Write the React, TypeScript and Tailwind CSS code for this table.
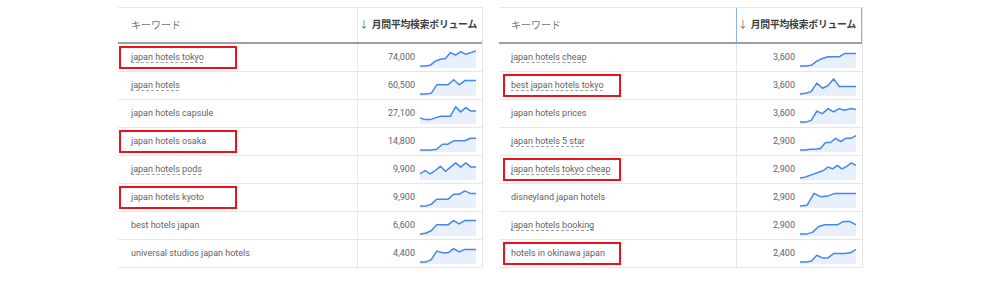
import React from "react";

type Row = { kw: string; vol: string; data: number[]; dotted?: boolean; marked?: boolean };

const leftRows: Row[] = [
  { kw: "japan hotels tokyo", vol: "74,000", dotted: true, marked: true, data: [0.05, 0.05, 0.1, 0.35, 0.45, 0.5, 0.85, 0.7, 0.9, 0.75, 0.85, 0.95] },
  { kw: "japan hotels", vol: "60,500", dotted: true, data: [0.05, 0.05, 0.1, 0.6, 0.6, 0.6, 0.9, 0.6, 0.85, 0.85, 0.85] },
  { kw: "japan hotels capsule", vol: "27,100", data: [0.3, 0.2, 0.2, 0.3, 0.4, 0.4, 0.4, 0.95, 0.65, 0.9, 0.7, 0.7] },
  { kw: "japan hotels osaka", vol: "14,800", marked: true, data: [0.05, 0.05, 0.05, 0.1, 0.4, 0.4, 0.6, 0.6, 0.6, 0.75, 0.75] },
  { kw: "japan hotels pods", vol: "9,900", dotted: true, data: [0.3, 0.5, 0.3, 0.5, 0.75, 0.45, 0.7, 0.95, 0.7, 0.95, 0.7, 0.7] },
  { kw: "japan hotels kyoto", vol: "9,900", marked: true, data: [0.05, 0.05, 0.15, 0.45, 0.45, 0.45, 0.75, 0.75, 0.95, 0.8, 0.8] },
  { kw: "best hotels japan", vol: "6,600", data: [0.05, 0.1, 0.25, 0.6, 0.6, 0.6, 0.85, 0.65, 0.85, 0.85, 0.85] },
  { kw: "universal studios japan hotels", vol: "4,400", data: [0.05, 0.05, 0.2, 0.7, 0.6, 0.6, 0.85, 0.65, 0.8, 0.8, 0.8] },
];

const rightRows: Row[] = [
  { kw: "japan hotels cheap", vol: "3,600", dotted: true, data: [0.05, 0.05, 0.1, 0.35, 0.5, 0.6, 0.6, 0.6, 0.8, 0.8, 0.8] },
  { kw: "best japan hotels tokyo", vol: "3,600", dotted: true, marked: true, data: [0.05, 0.1, 0.2, 0.7, 0.4, 0.55, 0.95, 0.5, 0.5, 0.5, 0.5] },
  { kw: "japan hotels prices", vol: "3,600", data: [0.05, 0.05, 0.15, 0.7, 0.55, 0.85, 0.65, 0.85, 0.75, 0.85, 0.8] },
  { kw: "japan hotels 5 star", vol: "2,900", dotted: true, data: [0.05, 0.05, 0.1, 0.1, 0.15, 0.5, 0.5, 0.75, 0.55, 0.75, 0.75, 0.9] },
  { kw: "japan hotels tokyo cheap", vol: "2,900", dotted: true, marked: true, data: [0.05, 0.1, 0.2, 0.3, 0.4, 0.5, 0.7, 0.6, 0.8, 0.6, 0.75, 0.95, 0.8] },
  { kw: "disneyland japan hotels", vol: "2,900", data: [0.05, 0.1, 0.8, 0.6, 0.65, 0.8, 0.8, 0.8, 0.8] },
  { kw: "japan hotels booking", vol: "2,900", dotted: true, data: [0.05, 0.05, 0.15, 0.5, 0.6, 0.6, 0.6, 0.8, 0.8, 0.6] },
  { kw: "hotels in okinawa japan", vol: "2,400", marked: true, data: [0.05, 0.05, 0.1, 0.45, 0.3, 0.3, 0.55, 0.55, 0.55, 0.6, 0.8] },
];

function Spark({ data }: { data: number[] }) {
  const w = 56;
  const h = 20;
  const pts = data.map((v, i) => [(i / (data.length - 1)) * w, h - 1 - v * (h - 3)]);
  const line = pts.map((p, i) => `${i ? "L" : "M"}${p[0].toFixed(1)} ${p[1].toFixed(1)}`).join(" ");
  const area = `${line} L${w} ${h} L0 ${h} Z`;
  return (
    <svg width={w} height={h} viewBox={`0 0 ${w} ${h}`} className="shrink-0">
      <path d={area} fill="#e8f0fe" />
      <path d={line} fill="none" stroke="#4285f4" strokeWidth="1.5" strokeLinejoin="round" />
    </svg>
  );
}

function Table({ rows, kwW, volW, boxLeft, textPl, active }: { rows: Row[]; kwW: string; volW: string; boxLeft: string; textPl: string; active?: boolean }) {
  return (
    <div className="border-t border-r border-[#e6e6e6] bg-white">
      {/* header */}
      <div className="flex h-[36px] border-b-2 border-[#9aa0a6]">
        <div className={`${kwW} ${textPl} flex items-center text-[10px] text-[#70757a]`}>キーワード</div>
        <div
          className={`${volW} flex items-center justify-end whitespace-nowrap pr-[5px] text-[9.8px] font-bold tracking-[-0.2px] text-[#3c4043] border-l ${
            active ? "border-[#8ab4f8] border-r" : "border-[#e6e6e6]"
          }`}
        >
          <span className="mr-[3px] font-normal text-[#5f6368]">↓</span>月間平均検索ボリューム
        </div>
      </div>
      {rows.map((r, i) => (
        <div key={i} className="flex h-[28px] border-b border-[#e6e6e6]">
          <div className={`${kwW} ${textPl} relative flex items-center text-[9px] text-[#5f6368]`}>
            <span className={r.dotted ? "underline decoration-dashed decoration-[#9aa0a6] underline-offset-2" : ""}>{r.kw}</span>
            {r.marked && <div className={`absolute ${boxLeft} top-[2px] h-[23px] w-[118px] border-2 border-[#e8141c]`} />}
          </div>
          <div className={`${volW} flex items-center justify-end gap-[5px] pr-[6px] border-l border-[#e6e6e6] text-[9px] text-[#5f6368]`}>
            <span>{r.vol}</span>
            <div className="self-end mb-[3px]">
              <Spark data={r.data} />
            </div>
          </div>
        </div>
      ))}
    </div>
  );
}

export default function App() {
  return (
    <div className="w-[1004px] h-[295px] bg-white pl-[118px] pt-[7px] flex items-start gap-[16px]" style={{ fontFamily: "Roboto, 'Noto Sans CJK JP', sans-serif" }}>
      <Table rows={leftRows} kwW="w-[239px]" volW="w-[125px]" boxLeft="left-[1px]" textPl="pl-[13px]" />
      <Table rows={rightRows} kwW="w-[237px]" volW="w-[126px]" boxLeft="left-[4px]" textPl="pl-[12px]" active />
    </div>
  );
}
